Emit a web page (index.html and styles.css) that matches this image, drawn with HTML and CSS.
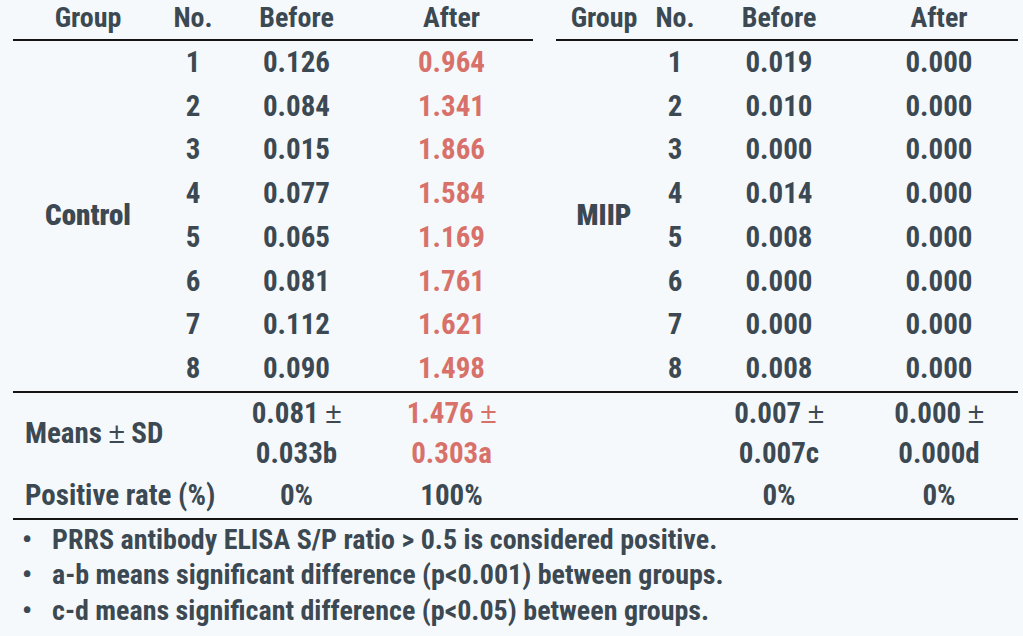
FILE: index.html
```html
<!DOCTYPE html>
<html lang="en">
<head>
<meta charset="utf-8">
<title>PRRS antibody ELISA results</title>
<link rel="stylesheet" href="styles.css">
</head>
<body>
<table class="data">
  <colgroup>
    <col class="c-grp"><col class="c-no"><col class="c-bef"><col class="c-aft">
    <col class="c-gap">
    <col class="c-grp2"><col class="c-no2"><col class="c-bef2"><col class="c-aft2">
  </colgroup>
  <thead>
    <tr>
      <th>Group</th><th>No.</th><th>Before</th><th>After</th>
      <th class="gap"></th>
      <th>Group</th><th>No.</th><th>Before</th><th>After</th>
    </tr>
  </thead>
  <tbody>
    <tr><td rowspan="8" class="grp">Control</td><td>1</td><td>0.126</td><td class="red">0.964</td><td class="gap"></td><td rowspan="8" class="grp">MIIP</td><td>1</td><td>0.019</td><td>0.000</td></tr>
    <tr><td>2</td><td>0.084</td><td class="red">1.341</td><td class="gap"></td><td>2</td><td>0.010</td><td>0.000</td></tr>
    <tr><td>3</td><td>0.015</td><td class="red">1.866</td><td class="gap"></td><td>3</td><td>0.000</td><td>0.000</td></tr>
    <tr><td>4</td><td>0.077</td><td class="red">1.584</td><td class="gap"></td><td>4</td><td>0.014</td><td>0.000</td></tr>
    <tr><td>5</td><td>0.065</td><td class="red">1.169</td><td class="gap"></td><td>5</td><td>0.008</td><td>0.000</td></tr>
    <tr><td>6</td><td>0.081</td><td class="red">1.761</td><td class="gap"></td><td>6</td><td>0.000</td><td>0.000</td></tr>
    <tr><td>7</td><td>0.112</td><td class="red">1.621</td><td class="gap"></td><td>7</td><td>0.000</td><td>0.000</td></tr>
    <tr><td>8</td><td>0.090</td><td class="red">1.498</td><td class="gap"></td><td>8</td><td>0.008</td><td>0.000</td></tr>
  </tbody>
  <tbody class="summary">
    <tr class="means">
      <td colspan="2" class="label">Means <span class="pm">±</span> SD</td>
      <td class="two">0.081 <span class="pm">±</span><br>0.033b</td>
      <td class="two red">1.476 <span class="pm">±</span><br>0.303a</td>
      <td class="gap"></td>
      <td colspan="2"></td>
      <td class="two">0.007 <span class="pm">±</span><br>0.007c</td>
      <td class="two">0.000 <span class="pm">±</span><br>0.000d</td>
    </tr>
    <tr class="rate">
      <td colspan="2" class="label">Positive rate (%)</td>
      <td>0%</td>
      <td>100%</td>
      <td class="gap"></td>
      <td colspan="2"></td>
      <td>0%</td>
      <td>0%</td>
    </tr>
  </tbody>
</table>
<ul class="notes">
  <li>PRRS antibody ELISA S/P ratio &gt; 0.5 is considered positive.</li>
  <li>a-b means significant difference (p&lt;0.001) between groups.</li>
  <li>c-d means significant difference (p&lt;0.05) between groups.</li>
</ul>
</body>
</html>
```

FILE: styles.css
```css
html, body {
  margin: 0;
  padding: 0;
  background: #f5f9fc;
}

body {
  font-family: "Roboto Condensed", Roboto, "Liberation Sans", sans-serif;
  color: #3c4952;
  font-weight: 700;
}

.data {
  margin-left: 13px;
  width: 1005px;
  table-layout: fixed;
  border-collapse: separate;
  border-spacing: 0;
}

.c-grp { width: 150px; }
.c-no { width: 60px; }
.c-bef { width: 147px; }
.c-aft { width: 163px; }
.c-gap { width: 23px; }
.c-grp2 { width: 96px; }
.c-no2 { width: 46px; }
.c-bef2 { width: 162px; }
.c-aft2 { width: 158px; }

.data th {
  font-size: 28px;
  line-height: 36px;
  padding: 0 0 3px;
  border-bottom: 2px solid #141414;
  text-align: center;
  font-weight: 700;
}

.data th.gap {
  border-bottom: none;
}

.data td {
  font-size: 29px;
  line-height: 43.7px;
  padding: 0;
  text-align: center;
  vertical-align: middle;
}

.data td.grp {
  font-weight: 900;
}

.red {
  color: #d8716a;
}

.pm {
  font-family: "Liberation Sans", sans-serif;
  font-weight: 400;
}

.summary tr.means td {
  border-top: 2px solid #141414;
  line-height: 40px;
}

.summary tr.rate td {
  line-height: 45px;
  border-bottom: 2px solid #141414;
}

.data td.label {
  text-align: left;
  padding-left: 12px;
}

.notes {
  list-style: none;
  margin: 2px 0 0;
  padding: 0 0 0 22px;
  font-size: 28px;
  line-height: 35.7px;
}

.notes li::before {
  content: "\2022";
  display: inline-block;
  width: 30px;
}
```
